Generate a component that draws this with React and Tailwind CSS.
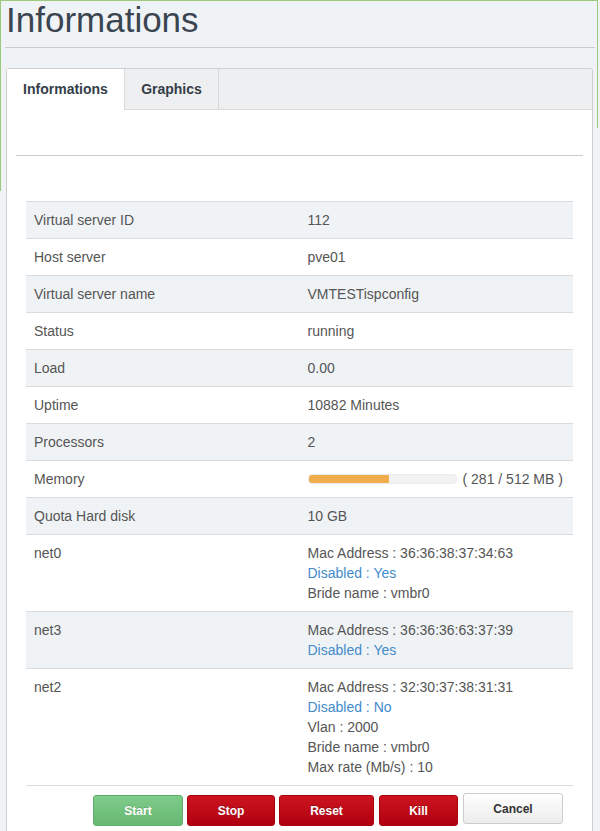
import React from "react";

const rows = [
  { label: "Virtual server ID", value: ["112"] },
  { label: "Host server", value: ["pve01"] },
  { label: "Virtual server name", value: ["VMTESTispconfig"] },
  { label: "Status", value: ["running"] },
  { label: "Load", value: ["0.00"] },
  { label: "Uptime", value: ["10882 Minutes"] },
  { label: "Processors", value: ["2"] },
  { label: "Memory", memory: { used: 281, total: 512 } },
  { label: "Quota Hard disk", value: ["10 GB"] },
  {
    label: "net0",
    value: ["Mac Address : 36:36:38:37:34:63", { blue: "Disabled : Yes" }, "Bride name : vmbr0"],
  },
  {
    label: "net3",
    value: ["Mac Address : 36:36:36:63:37:39", { blue: "Disabled : Yes" }],
  },
  {
    label: "net2",
    value: [
      "Mac Address : 32:30:37:38:31:31",
      { blue: "Disabled : No" },
      "Vlan : 2000",
      "Bride name : vmbr0",
      "Max rate (Mb/s) : 10",
    ],
  },
];

const MemoryBar = ({ used, total }) => (
  <div className="flex items-center gap-[6px]">
    <div className="w-[149px] h-[10px] rounded-[4px] bg-[#f2f2f2] border border-[#ececec] overflow-hidden">
      <div className="h-full bg-[#f0ad4e]" style={{ width: `${(used / total) * 100}%` }} />
    </div>
    <span>( {used} / {total} MB )</span>
  </div>
);

const btnBase =
  "h-[31px] rounded-[3px] border text-[12px] font-bold leading-none";
const redBtn =
  "text-white border-[#a8000c] bg-gradient-to-b from-[#cc1420] to-[#b0000e] [text-shadow:0_-1px_0_rgba(0,0,0,0.25)]";

export default function App() {
  return (
    <div
      className="relative min-h-screen bg-[#f0f3f6] text-[#555] overflow-hidden"
      style={{ fontFamily: '"Liberation Sans", Arial, sans-serif' }}
    >
      {/* green focus outline */}
      <div className="absolute left-0 top-0 w-[598px] h-px bg-[#9cc97c]" />
      <div className="absolute left-0 top-0 w-px h-[191px] bg-[#9cc97c]" />
      <div className="absolute left-[597px] top-0 w-px h-[128px] bg-[#9cc97c]" />

      <h1 className="px-[6px] pt-[1px] text-[35px] leading-[38px] text-[#3a4550] font-normal">
        Informations
      </h1>
      <div className="mx-[5px] mt-[8px] border-t border-[#cccccc]" />

      <div className="ml-[6px] mr-[7px] mt-[20px] border border-[#cfcfcf] rounded-t-[3px] bg-white min-h-[780px]">
        <div className="flex h-[41px] bg-[#eeeff1] border-b border-[#d9d9d9] rounded-t-[3px]">
          <div className="w-[118px] bg-white border-r border-[#d9d9d9] flex items-center justify-center text-[14px] font-bold text-[#343e48] h-[41px] -mb-px">
            Informations
          </div>
          <div className="w-[94px] border-r border-[#d9d9d9] flex items-center justify-center text-[14px] font-bold text-[#343e48]">
            Graphics
          </div>
        </div>

        <div className="px-[9px]">
          <div className="mt-[45px] border-t border-[#cccccc]" />
        </div>

        <div className="px-[19px] mt-[45px]">
          <table className="w-full text-[14px] leading-[20px] border-collapse">
            <tbody>
              {rows.map((r, i) => (
                <tr
                  key={r.label}
                  className={`border-t border-[#dcdcdc] ${i % 2 === 0 ? "bg-[#f0f3f6]" : "bg-white"}`}
                >
                  <td className="w-1/2 align-top px-[8px] py-[8px]">{r.label}</td>
                  <td className="w-1/2 align-top px-[8px] py-[8px]">
                    {r.memory ? (
                      <MemoryBar {...r.memory} />
                    ) : (
                      r.value.map((v, j) =>
                        typeof v === "string" ? (
                          <div key={j}>{v}</div>
                        ) : (
                          <div key={j} className="text-[#428bca]">
                            {v.blue}
                          </div>
                        )
                      )
                    )}
                  </td>
                </tr>
              ))}
              <tr className="border-t border-[#dcdcdc]">
                <td colSpan={2} className="h-0 p-0" />
              </tr>
            </tbody>
          </table>

          <div className="flex justify-end gap-[4px] pr-[10px] mt-[9px]">
            <button
              className={`${btnBase} w-[90px] text-white border-[#5fae6a] bg-gradient-to-b from-[#7fcc8b] to-[#68b772] [text-shadow:0_-1px_0_rgba(0,0,0,0.15)]`}
            >
              Start
            </button>
            <button className={`${btnBase} w-[88px] ${redBtn}`}>Stop</button>
            <button className={`${btnBase} w-[95px] ${redBtn}`}>Reset</button>
            <button className={`${btnBase} w-[79px] ml-[1px] ${redBtn}`}>Kill</button>
            <button
              className={`${btnBase} w-[100px] ml-[1px] text-[#333] border-[#cccccc] bg-gradient-to-b from-white to-[#ececec] -mt-[2px]`}
            >
              Cancel
            </button>
          </div>
        </div>
      </div>
    </div>
  );
}
